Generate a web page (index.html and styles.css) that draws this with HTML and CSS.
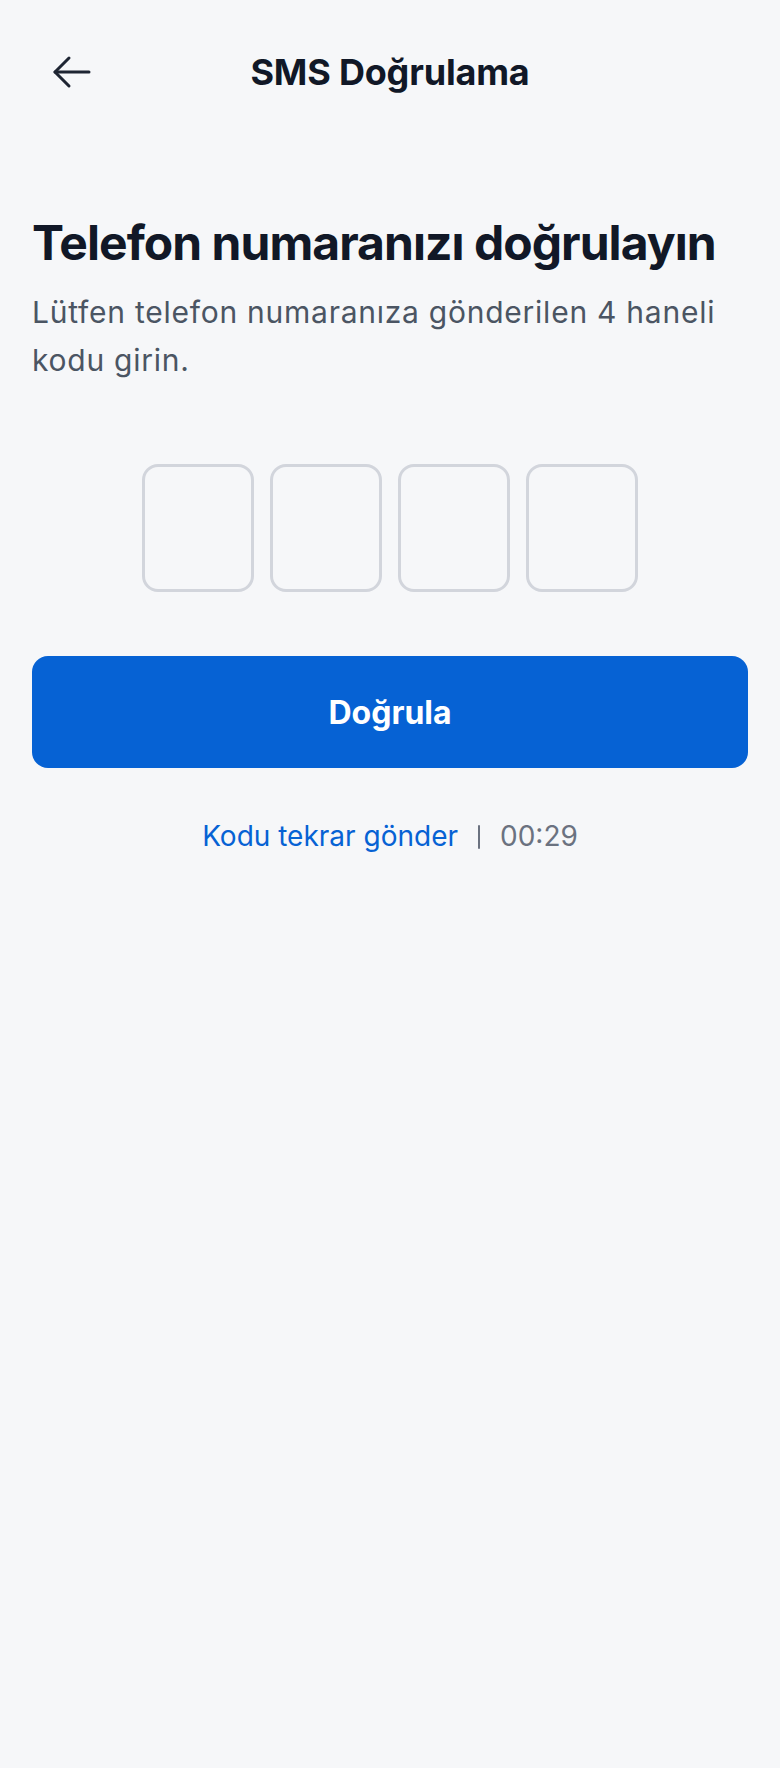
FILE: index.html
```html
<!DOCTYPE html>
<html lang="tr">
<head>
<meta charset="utf-8">
<title>SMS Doğrulama</title>
<link rel="stylesheet" href="styles.css">
</head>
<body>
<div class="screen">
  <header class="topbar">
    <button class="back" aria-label="Geri">
      <svg width="40" height="34" viewBox="0 0 40 34" fill="none" stroke="#1e2533" stroke-width="3" stroke-linecap="round" stroke-linejoin="round">
        <path d="M3 17 H37"/>
        <path d="M17 3 L3 17 L17 31"/>
      </svg>
    </button>
    <h2 class="topbar-title">SMS Doğrulama</h2>
    <span class="spacer"></span>
  </header>

  <main class="content">
    <h1 class="title">Telefon numaranızı doğrulayın</h1>
    <p class="subtitle">Lütfen telefon numaranıza gönderilen 4 haneli kodu girin.</p>

    <div class="otp">
      <div class="otp-box"></div>
      <div class="otp-box"></div>
      <div class="otp-box"></div>
      <div class="otp-box"></div>
    </div>

    <button class="primary">Doğrula</button>

    <div class="resend">
      <span class="resend-link">Kodu tekrar gönder</span>
      <span class="sep"></span>
      <span class="timer">00:29</span>
    </div>
  </main>
</div>
</body>
</html>
```

FILE: styles.css
```css
* { box-sizing: border-box; }

html, body {
  margin: 0;
  padding: 0;
  background: #f6f7f9;
}

body {
  font-family: "Inter", "Liberation Sans", sans-serif;
  color: #111827;
}

.screen {
  min-height: 1768px;
  background: #f6f7f9;
}

.topbar {
  height: 144px;
  display: grid;
  grid-template-columns: 1fr auto 1fr;
  align-items: center;
  padding: 0 52px;
}

.back {
  justify-self: start;
  background: none;
  border: 0;
  padding: 0;
  margin: 0;
  display: flex;
  cursor: pointer;
}

.topbar-title {
  margin: 0;
  font-size: 36px;
  font-weight: 700;
  line-height: 44px;
  letter-spacing: -0.005em;
  color: #111827;
}

.content {
  padding: 70px 32px 0;
  display: flex;
  flex-direction: column;
}

.title {
  margin: 0;
  font-size: 48px;
  line-height: 58px;
  font-weight: 700;
  letter-spacing: -0.02em;
  color: #111827;
}

.subtitle {
  margin: 16px 0 0;
  font-size: 30px;
  line-height: 48px;
  font-weight: 400;
  letter-spacing: 0.025em;
  color: #4b5563;
}

.otp {
  margin-top: 80px;
  display: flex;
  justify-content: center;
  gap: 16px;
}

.otp-box {
  width: 112px;
  height: 128px;
  border: 3px solid #d2d5dc;
  border-radius: 16px;
  background: #f6f7f9;
}

.primary {
  margin-top: 64px;
  height: 112px;
  width: 100%;
  border: 0;
  border-radius: 16px;
  background: #0662d4;
  color: #ffffff;
  font-family: "Inter", "Liberation Sans", sans-serif;
  font-size: 32px;
  font-weight: 700;
  cursor: pointer;
}

.resend {
  margin-top: 48px;
  display: flex;
  justify-content: center;
  align-items: center;
  gap: 20px;
  font-size: 28px;
  line-height: 40px;
}

.resend-link {
  color: #0662d4;
}

.sep {
  width: 2px;
  height: 24px;
  background: #6b7280;
  border-radius: 1px;
  margin-top: 2px;
}

.timer {
  color: #6b7280;
}
```
